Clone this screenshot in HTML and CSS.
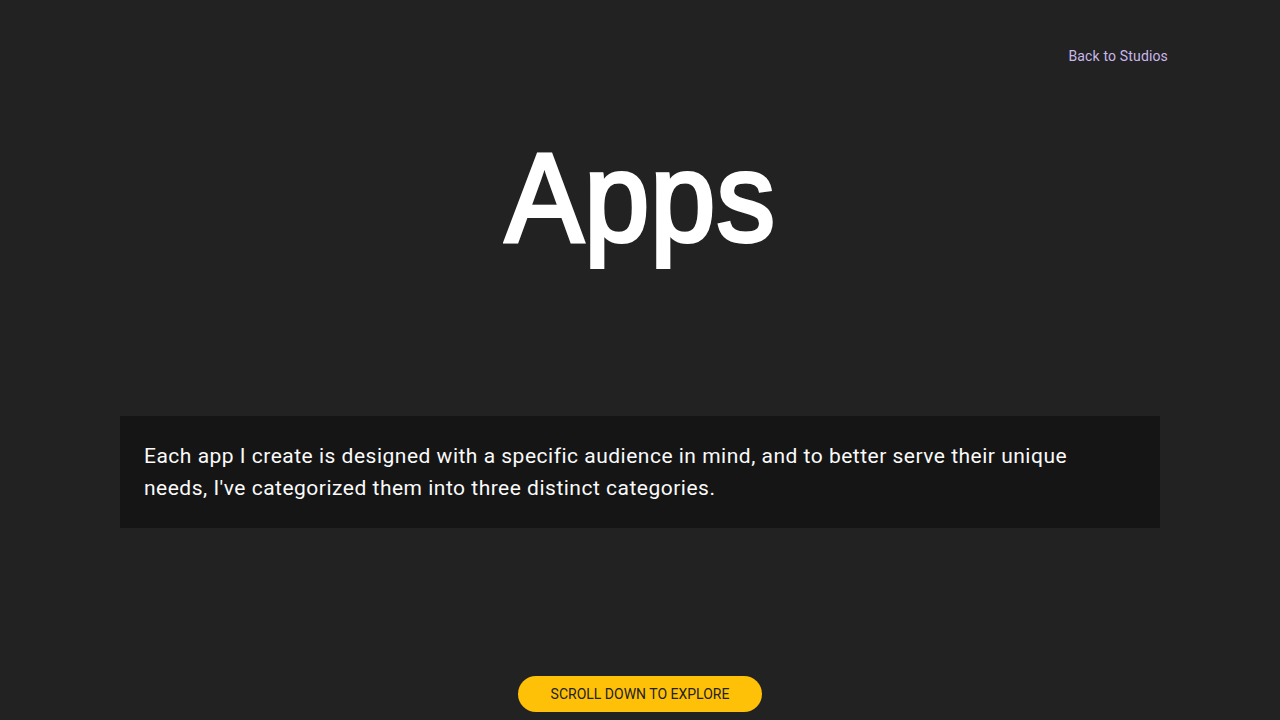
FILE: index.html
```html
<!DOCTYPE html>
<html lang="en">
<head>
<meta charset="utf-8">
<title>Apps</title>
<link rel="stylesheet" href="styles.css">
</head>
<body>
<main class="hero">
  <header class="topbar">
    <a class="back-link" href="#">Back to Studios</a>
  </header>
  <h1 class="title"><span class="title-text">Apps</span></h1>
  <section class="intro">
    <p>Each app I create is designed with a specific audience in mind, and to better serve their unique needs, I've categorized them into three distinct categories.</p>
  </section>
  <div class="cta-wrap">
    <a class="cta" href="#">Scroll down to explore</a>
  </div>
</main>
</body>
</html>
```

FILE: styles.css
```css
* { box-sizing: border-box; }
html, body {
  margin: 0;
  padding: 0;
  background: #222222;
  font-family: Roboto, "Noto Sans", sans-serif;
  color: #ffffff;
}
.hero {
  height: 720px;
  display: flex;
  flex-direction: column;
  padding: 0 120px;
}
.topbar {
  display: flex;
  justify-content: flex-end;
  padding: 46px 112px 0 0;
  margin-right: -120px;
  height: 66px;
}
.back-link {
  color: #c9b8ea;
  font-size: 14px;
  line-height: 20px;
  letter-spacing: 0.15px;
  text-decoration: none;
}
.title {
  margin: 57px 0 0;
  text-align: center;
  font-family: "Liberation Sans", Arial, sans-serif;
  font-weight: 400;
  font-size: 126px;
  line-height: 150px;
}
.title-text {
  display: inline-block;
  letter-spacing: 1px;
  padding-left: 1px;
  transform: scaleX(0.93);
  -webkit-text-stroke: 4px #ffffff;
}
.intro {
  margin-top: 143px;
  background: #151515;
  padding: 24px;
}
.intro p {
  margin: 0;
  font-size: 21px;
  letter-spacing: 0.5px;
  line-height: 32px;
  color: #fafafa;
}
.cta-wrap {
  margin-top: auto;
  display: flex;
  justify-content: center;
  padding-bottom: 8px;
}
.cta {
  display: inline-block;
  background: #ffc107;
  color: #222222;
  text-transform: uppercase;
  text-decoration: none;
  font-size: 14px;
  line-height: 36px;
  height: 36px;
  padding: 0 33px;
  border-radius: 18px;
}
```
